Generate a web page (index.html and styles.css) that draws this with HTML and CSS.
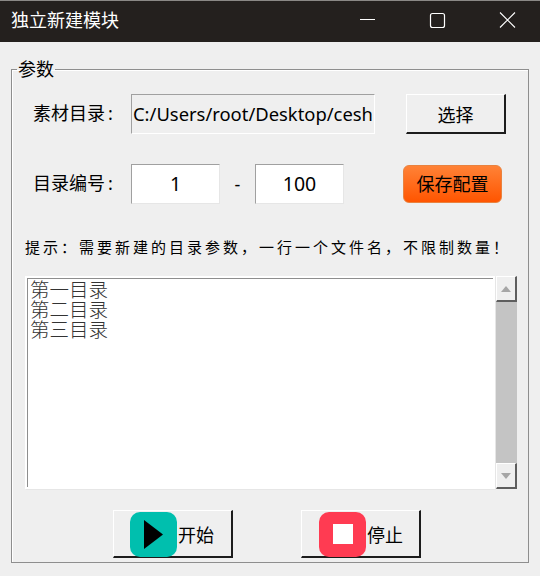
FILE: index.html
```html
<!DOCTYPE html>
<html lang="zh-CN">
<head>
  <meta charset="UTF-8" />
  <title>独立新建模块</title>
  <link rel="stylesheet" href="styles.css">
</head>
<body>
  <!-- Title bar -->
  <div class="titlebar">
    <span class="title">独立新建模块</span>
    <div class="win-btns">
      <svg width="70" height="42" viewBox="0 0 70 42"><path d="M30 19.5h15" stroke="#fff" fill="none"/></svg>
      <svg width="70" height="42" viewBox="0 0 70 42"><rect x="30.5" y="13.5" width="14" height="14" rx="2" stroke="#fff" stroke-width="1.2" fill="none"/></svg>
      <svg width="70" height="42" viewBox="0 0 70 42"><path d="M30 12.5l15 15M45 12.5l-15 15" stroke="#fff" stroke-width="1.1" fill="none"/></svg>
    </div>
  </div>

  <fieldset class="group">
    <legend>参数</legend>

    <div class="row first">
      <label class="lbl">素材目录&thinsp;:</label>
      <div class="field path">C:/Users/root/Desktop/cesh</div>
      <button class="btn pick">选择</button>
    </div>

    <div class="row second">
      <label class="lbl">目录编号&thinsp;:</label>
      <div class="field num">1</div>
      <span class="dash">-</span>
      <div class="field num">100</div>
      <button class="save">保存配置</button>
    </div>

    <p class="hint">提示&#xFF1A;需要新建的目录参数&#xFF0C;一行一个文件名&#xFF0C;不限制数量&#xFF01;</p>

    <!-- List with scrollbar -->
    <div class="listwrap">
      <div class="list">第一目录<br>第二目录<br>第三目录</div>
      <div class="scroll">
        <div class="arrow"><svg width="10" height="6" viewBox="0 0 10 6"><path d="M5 0l5 6H0z" fill="#a6a6a6"/></svg></div>
        <div class="track"></div>
        <div class="arrow"><svg width="10" height="6" viewBox="0 0 10 6"><path d="M0 0h10L5 6z" fill="#a6a6a6"/></svg></div>
      </div>
    </div>

    <div class="actions">
      <button class="btn run">
        <span class="icon teal"><svg width="20" height="29" viewBox="0 0 20 29"><path d="M0 0l19 14.5L0 29z" fill="#000"/></svg></span>开始
      </button>
      <button class="btn run stop">
        <span class="icon red"><i class="square"></i></span>停止
      </button>
    </div>
  </fieldset>
</body>
</html>
```

FILE: styles.css
```css
* {
  box-sizing: border-box;
}

body {
  margin: 0;
  width: 540px;
  height: 576px;
  overflow: hidden;
  background: #efefef;
  font-family: "Noto Sans", "Noto Sans CJK SC", sans-serif;
  color: #000;
}

.titlebar {
  height: 42px;
  background: #24201e;
  border-top: 1px solid #8a8886;
  display: flex;
  justify-content: space-between;
  color: #fff;
}

.title {
  font-size: 18px;
  line-height: 38px;
  margin-left: 11px;
}

.win-btns {
  display: flex;
}

.win-btns svg {
  display: block;
  margin-top: -1px;
}

.group {
  margin: 17px 0 0 11px;
  padding: 15px 0 0 21px;
  width: 518px;
  height: 504px;
  border: 1px solid #8e8e8e;
  box-shadow: inset 1px 1px 0 #fff;
  min-width: 0;
}

.group legend {
  margin-left: -16px;
  padding: 0 1px;
  font-size: 18px;
  line-height: 20px;
}

.row {
  display: flex;
  align-items: center;
  height: 40px;
}

.second {
  margin-top: 30px;
}

.lbl {
  width: 98px;
  font-size: 18px;
  line-height: 38px;
  height: 40px;
}

.field {
  height: 40px;
  background: #fff;
  border-top: 1px solid #a0a0a0;
  border-left: 1px solid #a0a0a0;
  border-right: 1px solid #e6e6e6;
  border-bottom: 1px solid #e6e6e6;
  font-size: 18.4px;
  line-height: 38px;
  white-space: nowrap;
  overflow: hidden;
}

.path {
  width: 244px;
  background: #efefef;
  padding-left: 1px;
  border-right-color: #fff;
  border-bottom-color: #fff;
}

.num {
  width: 89px;
  text-align: center;
  font-size: 19.5px;
}

.dash {
  width: 35px;
  text-align: center;
  font-size: 18px;
}

.btn {
  background: #efefef;
  border-top: 1px solid #fff;
  border-left: 1px solid #fff;
  border-right: 2px solid #1c1c1c;
  border-bottom: 2px solid #1c1c1c;
  padding: 0;
  font-family: inherit;
  font-size: 18px;
  color: #000;
}

.pick {
  width: 100px;
  height: 40px;
  margin-left: 31px;
}

.save {
  width: 99px;
  height: 38px;
  margin-left: 59px;
  padding: 0;
  border: 1px solid #e9823f;
  border-radius: 6px;
  background: linear-gradient(#ff8236, #ff5500);
  font-family: inherit;
  font-size: 18px;
  line-height: 34px;
  color: #000;
}

.hint {
  margin: 33px 0 0 -8px;
  font-family: "Noto Sans CJK SC", serif;
  font-size: 15px;
  line-height: 20px;
  letter-spacing: 3px;
  white-space: nowrap;
}

.listwrap {
  display: flex;
  margin: 19px 0 0 -8px;
  height: 213px;
}

.list {
  width: 470px;
  background: #fff;
  border: 2px solid #fff;
  box-shadow: inset 1px 1px 0 #8e8e8e, 1px 1px 0 #e6e6e6;
  padding: 1px 0 0 3px;
  font-family: "Noto Sans CJK SC", sans-serif;
  font-weight: 300;
  font-size: 19.5px;
  line-height: 20px;
  color: #333;
}

.scroll {
  width: 21px;
  margin-left: 1px;
  display: flex;
  flex-direction: column;
}

.track {
  flex: 1;
  background: #c4c4c4;
}

.arrow {
  height: 26px;
  display: flex;
  align-items: center;
  justify-content: center;
  background: #efefef;
  border-top: 1px solid #fff;
  border-left: 1px solid #fff;
  border-right: 2px solid #5e5e5e;
  border-bottom: 2px solid #5e5e5e;
}

.actions {
  display: flex;
  margin: 21px 0 0 80px;
  gap: 68px;
}

.run {
  width: 120px;
  height: 48px;
  display: flex;
  align-items: center;
  padding-left: 16px;
  padding-top: 1px;
}

.stop {
  padding-left: 17px;
}

.icon {
  width: 47px;
  height: 45px;
  border-radius: 10px;
  margin-right: 1px;
  display: flex;
  align-items: center;
  justify-content: center;
}

.teal {
  background: #00bfae;
}

.red {
  background: #ff3b52;
}

.square {
  width: 20px;
  height: 20px;
  background: #fff;
}
```
